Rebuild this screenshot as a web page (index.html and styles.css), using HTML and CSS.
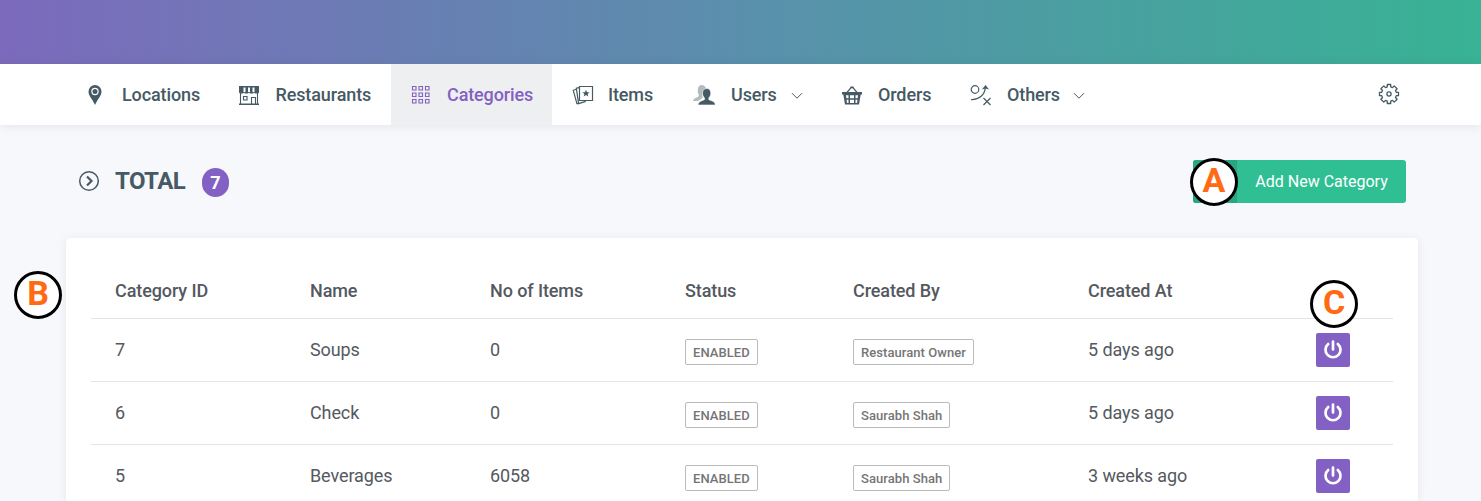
FILE: index.html
```html
<!DOCTYPE html>
<html lang="en">
<head>
<meta charset="utf-8">
<title>Categories</title>
<link rel="stylesheet" href="styles.css">
</head>
<body>
<header class="topbar"></header>
<nav class="nav">
  <a class="nav-item locations">
    <svg class="icon" viewBox="0 0 22 22"><path fill="currentColor" fill-rule="evenodd" d="M10 1a6.500 6.500 0 0 0-6.500 6.500C3.500 12 7.500 15 10 21c2.500-6 6.500-9 6.500-13.500A6.500 6.500 0 0 0 10 1zm0 2.800a3.700 3.700 0 1 1 0 7.400 3.700 3.700 0 0 1 0-7.400z"/><circle cx="10" cy="7.500" r="2.500" fill="currentColor"/></svg>
    <span class="label">Locations</span></a>
  <a class="nav-item restaurants">
    <svg class="icon" viewBox="0 0 22 22"><path fill="currentColor" d="M1 2h20v6.500l-1 1h-3l-1-1-1 1h-3l-1-1-1 1H7l-1-1-1 1H2l-1-1z"/><path fill="#fff" d="M5.500 3.500h2V8h-2zM14.500 3.500h2V8h-2zM10 3.500h2V8h-2z"/><path fill="none" stroke="currentColor" stroke-width="1.100" d="M2.500 9v11M19.500 9v11M5.500 12.500H9V16H5.500zM13.500 20v-6.500h4V20"/><path fill="currentColor" d="M1 19.500h20V21H1z"/></svg>
    <span class="label">Restaurants</span></a>
  <a class="nav-item categories active">
    <svg class="icon" viewBox="0 0 22 22"><path fill="none" stroke="currentColor" stroke-width="1.100" d="M1.500 2.500H5V6H1.500zM8 2.500h3.500V6H8zM14.500 2.500H18V6h-3.500zM1.500 9H5v3.500H1.500zM8 9h3.500v3.500H8zM14.500 9H18v3.500h-3.500zM1.500 15.500H5V19H1.500zM8 15.500h3.500V19H8zM14.500 15.500H18V19h-3.500z"/></svg>
    <span class="label">Categories</span></a>
  <a class="nav-item items">
    <svg class="icon" viewBox="0 0 22 22"><g fill="none" stroke="currentColor" stroke-width="1.200"><path d="M7.500 2.500h13v14h-13zM7 3.600 4.300 4.200l2.300 15.400 7.200-2.200M4.200 5.300 1.300 6.300l3.600 13.400 2-.3"/></g><path fill="currentColor" d="m14 5.800 1 2.500h2.600l-2 1.600.8 2.600-2.400-1.500-2.400 1.500.8-2.600-2-1.600H13z"/></svg>
    <span class="label">Items</span></a>
  <a class="nav-item users">
    <svg class="icon" viewBox="0 0 22 22"><path fill="#b3bbbd" d="M8.500 1C11 1 13 2.500 13 5.500L9.500 10v4L5 17H0c0-2 2-3 5-4l1-2C4.500 9 4.500 7 5 5c.3-2.500 1.500-4 3.500-4z"/><path fill="currentColor" stroke="#fff" stroke-width=".6" d="M13.800 4.500c2.500 0 4 1.800 4 4.500 0 2-.8 3.800-2 5v1.500c1.500 1.300 6 1.200 6.700 5.500H5c.5-4.300 5-4.200 6.500-5.500V14c-1.200-1.200-2-3-2-5 0-2.700 1.800-4.500 4.300-4.500z"/></svg>
    <span class="label">Users</span><svg class="chevron" viewBox="0 0 12 8"><path d="m1 1.200 5 5 5-5"/></svg></a>
  <a class="nav-item orders">
    <svg class="icon" viewBox="0 0 22 22"><path fill="none" stroke="currentColor" stroke-width="1.200" d="M5.500 9 10 3.500h2L16.500 9"/><path fill="currentColor" d="M9.500 2.500h3v1.800h-3zM1 8h20v2.500h-1.300L18 20.500H4l-1.700-10H1z"/><path fill="#fff" d="M5 11.300h2.500v3H5.400zM9 11.300h4v3H9zM14.500 11.300H17l-.4 3h-2.100zM5.500 15.800h2V19H6zM9 15.800h4V19H9zM14.500 15.800h2L16 19h-1.500z"/></svg>
    <span class="label">Orders</span></a>
  <a class="nav-item others">
    <svg class="icon" viewBox="0 0 22 22"><g fill="none" stroke="currentColor" stroke-width="1.200"><circle cx="5" cy="5.500" r="3.800"/><path d="M1 15.500c7.500.5 14-4 14.500-13M13.500 14l7 7M20.500 14l-7 7"/></g><path fill="currentColor" d="m15.500 1 3.600 4.500-3.600-1-3.600 1z"/></svg>
    <span class="label">Others</span><svg class="chevron" viewBox="0 0 12 8"><path d="m1 1.200 5 5 5-5"/></svg></a>
  <a class="settings"><svg class="icon" viewBox="0 0 22 22"><g fill="none" stroke="currentColor" stroke-width="1.300" stroke-linejoin="round"><circle cx="11" cy="11" r="2.100"/><path d="M9.300 1.500h3.400v2.300l1.800.8 1.700-1.700 2.900 2.900-1.600 1.700.8 1.800h2.200v3.400h-2.200l-.8 1.800 1.600 1.700-2.900 2.900-1.700-1.700-1.800.8v2.300H9.300v-2.300l-1.800-.8-1.700 1.700-2.900-2.900 1.600-1.700-.8-1.800H1.500V9.300h2.200l.8-1.800-1.600-1.700 2.900-2.900 1.700 1.700 1.800-.8z"/></g></svg></a>
</nav>
<main>
  <div class="page-head">
    <svg class="title-icon" viewBox="0 0 22 22"><circle cx="11" cy="11" r="9.300"/><path class="arrow" d="m9 6.500 4.500 4.500L9 15.500"/></svg>
    <h1>TOTAL</h1><span class="count">7</span>
    <button class="add"><span class="add-icon"></span><span class="add-label">Add New Category</span></button>
  </div>
  <section class="card">
    <table>
      <colgroup><col class="c1"><col class="c2"><col class="c3"><col class="c4"><col class="c5"><col class="c6"><col></colgroup>
      <thead><tr><th>Category ID</th><th>Name</th><th>No of Items</th><th>Status</th><th>Created By</th><th>Created At</th><th></th></tr></thead>
      <tbody>
        <tr><td>7</td><td>Soups</td><td>0</td><td><span class="tag">ENABLED</span></td><td><span class="tag">Restaurant Owner</span></td><td>5 days ago</td><td class="action"><button class="power"><svg viewBox="0 0 20 20"><path d="M5.200 4a7.500 7.500 0 1 0 9.600 0M10 1.500v8"/></svg></button></td></tr>
        <tr><td>6</td><td>Check</td><td>0</td><td><span class="tag">ENABLED</span></td><td><span class="tag">Saurabh Shah</span></td><td>5 days ago</td><td class="action"><button class="power"><svg viewBox="0 0 20 20"><path d="M5.200 4a7.500 7.500 0 1 0 9.600 0M10 1.500v8"/></svg></button></td></tr>
        <tr><td>5</td><td>Beverages</td><td>6058</td><td><span class="tag">ENABLED</span></td><td><span class="tag">Saurabh Shah</span></td><td>3 weeks ago</td><td class="action"><button class="power"><svg viewBox="0 0 20 20"><path d="M5.200 4a7.500 7.500 0 1 0 9.600 0M10 1.500v8"/></svg></button></td></tr>
      </tbody>
    </table>
  </section>
</main>
<span class="marker marker-a">A</span>
<span class="marker marker-b">B</span>
<span class="marker marker-c">C</span>
</body>
</html>
```
FILE: styles.css
```css
* { box-sizing: border-box; }
body { margin: 0; height: 501px; overflow: hidden; position: relative; background: #f7f8fc; color: #455a64; font-family: Roboto, sans-serif; }
.topbar { height: 64px; background: linear-gradient(90deg, #7c6abc, #5a8fac 50%, #38b294); }
.nav { display: flex; height: 61px; padding: 0 81px 0 68px; background: #fff; box-shadow: 0 1px 10px rgba(69, 90, 100, .12); font-size: 18px; font-weight: 500; letter-spacing: -.12px; }
.nav-item { display: flex; align-items: center; padding-left: 18px; white-space: nowrap; }
.icon { width: 22px; height: 22px; flex: none; }
.label { margin-left: 15px; line-height: 24px; }
.locations { width: 152px; padding-left: 17px; }
.restaurants { width: 171px; }
.restaurants .label { margin-left: 15.5px; }
.categories { width: 161px; padding-left: 20px; }
.categories .label { margin-left: 14px; }
.items { width: 121px; padding-left: 20px; }
.items .label { margin-left: 14px; }
.users { width: 148px; padding-left: 20px; }
.users .label { margin-left: 16px; }
.orders { width: 130px; padding-left: 20px; }
.others { width: 154px; padding-left: 19px; }
.active { background: #eeeff1; color: #8360c3; }
.chevron { width: 12px; height: 8px; margin: 3px 0 0 14px; fill: none; stroke: #455a64; stroke-width: 1; }
.others .chevron { margin-left: 13px; }
.settings { display: flex; align-items: center; margin-left: auto; padding-bottom: 2px; }
.page-head { display: flex; align-items: center; height: 113px; padding: 0 75px 0 78px; }
.title-icon { width: 22px; height: 22px; margin-top: -1px; fill: none; stroke: #455a64; stroke-width: 1.5; }
.arrow { stroke-width: 2.2; }
h1 { margin: -1px 0 0 15px; width: 87px; font-size: 24px; line-height: 28px; font-weight: 700; letter-spacing: -.6px; }
.count { width: 27px; height: 29px; margin-top: 2px; border-radius: 14px; background: #8360c3; color: #fff; font-size: 18px; line-height: 29px; font-weight: 700; text-align: center; }
button { border: 0; padding: 0; font-family: inherit; }
.add { display: flex; width: 213px; height: 43px; margin-left: auto; overflow: hidden; border-radius: 3px; background: #2fbf93; color: #fff; font-size: 16px; line-height: 43px; }
.add-icon { width: 44px; height: 43px; background: #2aa681; }
.add-label { flex: 1; text-align: center; }
.card { width: 1352px; height: 263px; margin-left: 66px; padding: 26px 25px 0; background: #fff; border-radius: 4px 4px 0 0; box-shadow: 0 1px 8px rgba(69, 90, 100, .1); }
table { width: 1302px; table-layout: fixed; border-collapse: separate; border-spacing: 0; color: #54595f; font-size: 18px; letter-spacing: -.1px; }
.c1 { width: 195px; }
.c2 { width: 180px; }
.c3 { width: 195px; }
.c4 { width: 168px; }
.c5 { width: 235px; }
.c6 { width: 228px; }
th, td { padding: 0 0 2px 24px; text-align: left; vertical-align: middle; }
th { height: 54px; font-weight: 500; }
td { height: 63px; border-top: 1px solid #e3e4e6; }
.action { padding-bottom: 0; }
.tag { display: inline-block; height: 26px; padding: 0 7px; border: 1px solid #bbb; border-radius: 2px; color: #757575; font-size: 13px; line-height: 25px; font-weight: 500; letter-spacing: .06px; vertical-align: middle; margin-top: 5px; }
.power { display: flex; align-items: center; justify-content: center; width: 34px; height: 34px; border-radius: 2px; background: #8360c3; }
.power svg { width: 20px; height: 20px; margin-top: -1px; fill: none; stroke: #fff; stroke-width: 2.7; stroke-linecap: round; }
.marker { position: absolute; width: 48px; height: 48px; border: 3px solid #000; border-radius: 50%; background: #fff; color: #ff6a13; font-size: 34px; line-height: 38px; font-weight: 700; text-align: center; }
.marker-a { left: 1190px; top: 158px; }
.marker-b { left: 14px; top: 271px; }
.marker-c { left: 1310px; top: 280px; }
```
